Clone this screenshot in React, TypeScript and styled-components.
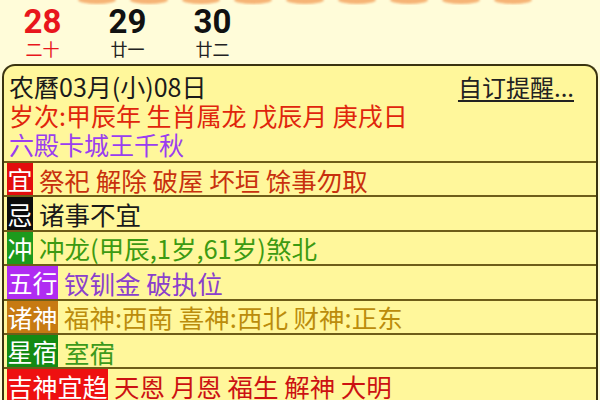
import React from "react";
import styled, { createGlobalStyle } from "styled-components";

const Global = createGlobalStyle`
  html, body { margin: 0; padding: 0; }
  body {
    background: #fffcd9;
    font-family: "Noto Sans CJK SC", "Noto Sans", sans-serif;
    width: 600px;
    height: 400px;
    overflow: hidden;
  }
`;

const Page = styled.div`
  width: 600px;
  height: 400px;
  overflow: hidden;
  display: flex;
  flex-direction: column;
`;

const TitleEdge = styled.div`
  height: 5px;
  flex: 0 0 auto;
  overflow: hidden;
  display: flex;
  gap: 14px;
  padding-left: 78px;
`;

const Blob = styled.span`
  flex: 0 0 auto;
  width: 38px;
  height: 8px;
  margin-top: -4px;
  border-radius: 50%;
  background: #f6b476;
  filter: blur(1.2px);
`;

const DateStrip = styled.div`
  height: 59px;
  flex: 0 0 auto;
  display: flex;
`;

const DateCol = styled.div`
  width: 85px;
  display: flex;
  flex-direction: column;
  align-items: center;
`;

const DayNum = styled.div<{ $red?: boolean }>`
  font-family: Roboto, "Liberation Sans", sans-serif;
  font-weight: 700;
  font-size: 33px;
  line-height: 35px;
  margin-top: -1px;
  color: ${(p) => (p.$red ? "#e8161c" : "#111")};
`;

const LunarDay = styled.div<{ $red?: boolean }>`
  font-size: 17px;
  line-height: 18px;
  margin-top: 1px;
  color: ${(p) => (p.$red ? "#e8161c" : "#222")};
`;

const Panel = styled.div`
  margin: 0 2px;
  flex: 1;
  background: #fff79b;
  border: 2px solid #3a3310;
  border-bottom: none;
  border-radius: 13px 13px 0 0;
  display: flex;
  flex-direction: column;
`;

const Header = styled.div`
  padding: 6px 5px 2px 5px;
  display: flex;
  flex-direction: column;
  border-bottom: 2px solid #6e5d18;
`;

const HeaderLine = styled.div<{ $color: string }>`
  display: flex;
  justify-content: space-between;
  align-items: center;
  font-size: 25px;
  line-height: 29px;
  height: 29px;
  color: ${(p) => p.$color};
  white-space: nowrap;
`;

const Remind = styled.span`
  color: #222;
  font-size: 24px;
  text-decoration: underline;
  text-decoration-thickness: 1.5px;
  text-underline-offset: 3px;
  margin-right: 17px;
`;

const Row = styled.div`
  height: 32.4px;
  border-bottom: 2px solid #6e5d18;
  display: flex;
  align-items: stretch;
  padding-left: 3px;
  flex: 0 0 auto;
`;

const Label = styled.div<{ $bg: string }>`
  background: ${(p) => p.$bg};
  color: #fff;
  font-size: 25px;
  line-height: 32px;
  display: flex;
  align-items: center;
  padding: 0 0.5px;
`;

const Content = styled.div<{ $color: string }>`
  color: ${(p) => p.$color};
  font-size: 25.5px;
  display: flex;
  align-items: center;
  padding-left: 6px;
  white-space: pre;
`;

const rows = [
  { label: "宜", bg: "#e30d0d", color: "#c8300e", text: "祭祀 解除 破屋 坏垣 馀事勿取" },
  { label: "忌", bg: "#0c0c0c", color: "#1a1a1a", text: "诸事不宜" },
  { label: "冲", bg: "#1c9a1c", color: "#3c9a12", text: "冲龙(甲辰,1岁,61岁)煞北" },
  { label: "五行", bg: "#b02cf2", color: "#8a40cc", text: "钗钏金 破执位" },
  { label: "诸神", bg: "#c77a12", color: "#bb8c0c", text: "福神:西南 喜神:西北 财神:正东" },
  { label: "星宿", bg: "#138a13", color: "#3c9a1c", text: "室宿" },
  { label: "吉神宜趋", bg: "#ee1010", color: "#cc1212", text: "天恩 月恩 福生 解神 大明" },
];

const dates = [
  { n: "28", l: "二十", red: true },
  { n: "29", l: "廿一", red: false },
  { n: "30", l: "廿二", red: false },
];

export default function App() {
  return (
    <Page>
      <Global />
      <TitleEdge>
        {Array.from({ length: 9 }).map((_, i) => (
          <Blob key={i} />
        ))}
      </TitleEdge>
      <DateStrip>
        {dates.map((d) => (
          <DateCol key={d.n}>
            <DayNum $red={d.red}>{d.n}</DayNum>
            <LunarDay $red={d.red}>{d.l}</LunarDay>
          </DateCol>
        ))}
      </DateStrip>
      <Panel>
        <Header>
          <HeaderLine $color="#1a1a1a">
            <span>农曆03月(小)08日</span>
            <Remind>自订提醒...</Remind>
          </HeaderLine>
          <HeaderLine $color="#e0250c">岁次:甲辰年 生肖属龙 戊辰月 庚戌日</HeaderLine>
          <HeaderLine $color="#9a3ef0">六殿卡城王千秋</HeaderLine>
        </Header>
        {rows.map((r) => (
          <Row key={r.label}>
            <Label $bg={r.bg}>{r.label}</Label>
            <Content $color={r.color}>{r.text}</Content>
          </Row>
        ))}
      </Panel>
    </Page>
  );
}
